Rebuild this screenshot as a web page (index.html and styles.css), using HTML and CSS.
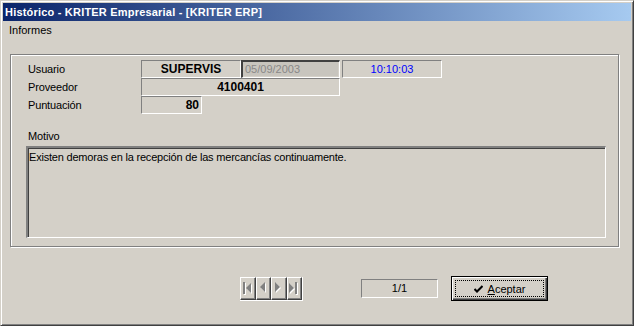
FILE: index.html
```html
<!DOCTYPE html>
<html lang="es">
<head>
    <meta charset="UTF-8">
    <title>Histórico - KRITER Empresarial - [KRITER ERP]</title>
    <link rel="stylesheet" href="styles.css">
</head>
<body>
    <div class="window">
        <div class="titlebar">Histórico - KRITER Empresarial - [KRITER ERP]</div>
        <div class="menubar"><span class="menu-item">Informes</span></div>

        <div class="group">
            <div class="row">
                <span class="label">Usuario</span>
                <span class="field bold center w-user">SUPERVIS</span>
                <span class="field-disabled">05/09/2003</span>
                <span class="field center time">10:10:03</span>
            </div>
            <div class="row">
                <span class="label">Proveedor</span>
                <span class="field bold center w-prov">4100401</span>
            </div>
            <div class="row">
                <span class="label">Puntuación</span>
                <span class="field bold right w-score">80</span>
            </div>

            <div class="motivo-label">Motivo</div>
            <div class="memo">Existen demoras en la recepción de las mercancías continuamente.</div>
        </div>

        <div class="footer">
            <div class="navigator">
                <!-- first / prior / next / last, disabled look -->
                <span class="nav-btn">
                    <svg width="10" height="13" viewBox="0 0 10 13">
                        <rect x="1" y="1" width="2" height="12" fill="#fff"/>
                        <path d="M9 2 L4 7 L9 12 Z" fill="#fff"/>
                        <rect x="0" y="0" width="2" height="12" fill="#808080"/>
                        <path d="M8 1 L3 6 L8 11 Z" fill="#808080"/>
                    </svg>
                </span>
                <span class="nav-btn">
                    <svg width="7" height="12" viewBox="0 0 7 12">
                        <path d="M6 1 L1 6 L6 11 Z" fill="#fff"/>
                        <path d="M5 0 L0 5 L5 10 Z" fill="#808080"/>
                    </svg>
                </span>
                <span class="nav-btn">
                    <svg width="7" height="12" viewBox="0 0 7 12">
                        <path d="M1 1 L6 6 L1 11 Z" fill="#fff"/>
                        <path d="M0 0 L5 5 L0 10 Z" fill="#808080"/>
                    </svg>
                </span>
                <span class="nav-btn">
                    <svg width="10" height="13" viewBox="0 0 10 13">
                        <rect x="7" y="1" width="2" height="12" fill="#fff"/>
                        <path d="M1 2 L6 7 L1 12 Z" fill="#fff"/>
                        <rect x="6" y="0" width="2" height="12" fill="#808080"/>
                        <path d="M0 1 L5 6 L0 11 Z" fill="#808080"/>
                    </svg>
                </span>
            </div>
            <div class="counter">1/1</div>
            <button class="btn-ok" type="button">
                <span class="focus-rect">
                    <svg width="9" height="8" viewBox="0 0 9 8">
                        <path d="M0.5 4 L3 6.5 L8.5 1" fill="none" stroke="#000" stroke-width="2"/>
                    </svg>
                    <span><u>A</u>ceptar</span>
                </span>
            </button>
        </div>
    </div>
</body>
</html>
```

FILE: styles.css
```css
html, body {
    margin: 0;
    padding: 0;
}

body {
    width: 634px;
    height: 326px;
    background-color: #d4d0c8;
    font-family: "Liberation Sans", Arial, sans-serif;
    font-size: 11px;
    color: #000;
    overflow: hidden;
}

.window {
    box-sizing: border-box;
    width: 634px;
    height: 326px;
    padding: 1px;
    border-top: 1px solid #d4d0c8;
    border-left: 1px solid #d4d0c8;
    border-right: 1px solid #404040;
    border-bottom: 1px solid #404040;
    box-shadow: inset 1px 1px 0 #fff, inset -1px -1px 0 #808080;
}

.titlebar {
    height: 18px;
    line-height: 18px;
    padding-left: 2px;
    margin: 1px 1px 0 1px;
    background: linear-gradient(to right, #0a246a, #a6caf0);
    color: #fff;
    font-weight: bold;
    font-size: 11px;
    letter-spacing: 0.2px;
    white-space: nowrap;
}

.menubar {
    height: 19px;
    line-height: 19px;
    padding-left: 7px;
}

.group {
    box-sizing: border-box;
    width: 609px;
    height: 193px;
    margin: 14px 0 0 8px;
    padding: 5px 0 0 15px;
    border: 1px solid #808080;
    box-shadow: 1px 1px 0 #fff, inset 1px 1px 0 #fff;
}

.row {
    display: flex;
    height: 18px;
}

.label {
    width: 113px;
    padding-left: 2px;
    line-height: 18px;
    letter-spacing: -0.15px;
}

.field {
    box-sizing: border-box;
    height: 18px;
    line-height: 16px;
    border-top: 1px solid #808080;
    border-left: 1px solid #808080;
    border-right: 1px solid #fff;
    border-bottom: 1px solid #fff;
    padding: 0 2px;
    white-space: nowrap;
}

.bold {
    font-weight: bold;
    font-size: 12px;
}

.center {
    text-align: center;
}

.right {
    text-align: right;
}

.w-user {
    width: 100px;
}

.w-prov {
    width: 199px;
}

.w-score {
    width: 61px;
}

.field-disabled {
    box-sizing: border-box;
    width: 99px;
    height: 18px;
    line-height: 14px;
    padding-left: 2px;
    background-color: #c8c5be;
    color: #888;
    border-top: 2px solid #404040;
    border-left: 2px solid #404040;
    border-right: 1px solid #fff;
    border-bottom: 1px solid #fff;
    box-shadow: inset -1px -1px 0 #d4d0c8;
}

.time {
    width: 100px;
    margin-left: 2px;
    color: #0000ff;
}

.motivo-label {
    margin-top: 15px;
    padding-left: 2px;
    height: 17px;
    line-height: 15px;
    letter-spacing: -0.15px;
}

.memo {
    box-sizing: border-box;
    width: 580px;
    height: 92px;
    padding: 2px 1px;
    line-height: 14px;
    letter-spacing: -0.2px;
    border-top: 2px solid #808080;
    border-left: 2px solid #808080;
    border-right: 1px solid #fff;
    border-bottom: 1px solid #fff;
    box-shadow: inset 1px 1px 0 #404040;
}

.footer {
    display: flex;
    align-items: center;
    height: 27px;
    margin-top: 28px;
    padding-left: 238px;
}

.navigator {
    display: flex;
    height: 24px;
    border-right: 1px solid #fff;
    border-bottom: 1px solid #fff;
    box-sizing: border-box;
    width: 63px;
}

.nav-btn {
    box-sizing: border-box;
    width: 15.5px;
    height: 23px;
    display: flex;
    align-items: center;
    justify-content: center;
    border-top: 1px solid #fff;
    border-left: 1px solid #fff;
    border-right: 1px solid #404040;
    border-bottom: 1px solid #404040;
    box-shadow: inset -1px -1px 0 #808080;
}

.counter {
    box-sizing: border-box;
    width: 77px;
    height: 19px;
    line-height: 17px;
    margin-left: 58px;
    text-align: center;
    border-top: 1px solid #808080;
    border-left: 1px solid #808080;
    border-right: 1px solid #fff;
    border-bottom: 1px solid #fff;
}

.btn-ok {
    box-sizing: border-box;
    width: 97px;
    height: 25px;
    margin-left: 13px;
    padding: 3px;
    background-color: #d4d0c8;
    border: 1px solid #000;
    box-shadow: inset 1px 1px 0 #fff, inset -1px -1px 0 #404040, inset -2px -2px 0 #808080;
    font-family: "Liberation Sans", Arial, sans-serif;
    font-size: 11px;
    color: #000;
    display: flex;
}

.focus-rect {
    flex: 1;
    display: flex;
    align-items: center;
    justify-content: center;
    gap: 5px;
    border: 1px dotted #000;
}

.focus-rect u {
    text-underline-offset: 1px;
}
```
